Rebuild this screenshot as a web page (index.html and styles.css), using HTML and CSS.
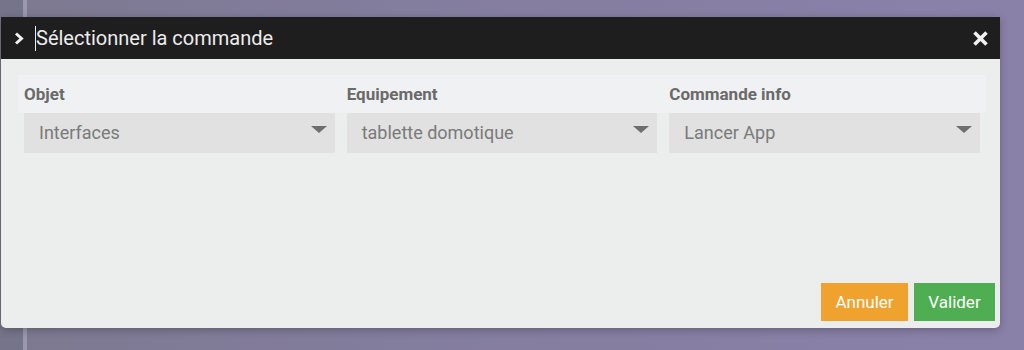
FILE: index.html
```html
<!DOCTYPE html>
<html lang="fr">
<head>
    <meta charset="UTF-8">
    <meta name="viewport" content="width=device-width, initial-scale=1.0">
    <title>Sélectionner la commande</title>
    <link rel="stylesheet" href="styles.css">
</head>
<body>
    <div class="backdrop">
        <div class="side-strip"></div>
        <div class="dialog">
            <div class="dialog-header">
                <svg class="chevron" width="11" height="13" viewBox="0 0 11 13">
                    <path d="M2 1.5 L7.5 6.5 L2 11.5" fill="none" stroke="#f2f2f2" stroke-width="3"/>
                </svg>
                <span class="title">Sélectionner la commande</span>
                <svg class="close" width="17" height="17" viewBox="0 0 17 17">
                    <path d="M2.5 2.5 L14.5 14.5 M14.5 2.5 L2.5 14.5" stroke="#f2f2f2" stroke-width="3.6"/>
                </svg>
            </div>
            <div class="dialog-body">
                <div class="form-row">
                    <div class="field">
                        <label>Objet</label>
                        <div class="select">Interfaces<span class="caret"></span></div>
                    </div>
                    <div class="field">
                        <label>Equipement</label>
                        <div class="select">tablette domotique<span class="caret"></span></div>
                    </div>
                    <div class="field">
                        <label>Commande info</label>
                        <div class="select">Lancer App<span class="caret"></span></div>
                    </div>
                </div>
            </div>
            <div class="dialog-footer">
                <button class="btn btn-warning">Annuler</button>
                <button class="btn btn-success">Valider</button>
            </div>
        </div>
    </div>
</body>
</html>
```

FILE: styles.css
```css
html, body {
    margin: 0;
    height: 100%;
}
body {
    font-family: Roboto, "Liberation Sans", sans-serif;
    background: linear-gradient(to right, #7d7990 0%, #837d9e 40%, #8a81a9 100%);
    overflow: hidden;
}
.backdrop {
    position: relative;
    height: 350px;
    padding: 17px 0 0 1px;
    box-sizing: border-box;
}
.side-strip {
    position: absolute;
    left: 0;
    top: 0;
    bottom: 0;
    width: 23px;
    background: #76748a;
    border-right: 4px solid #9a97ae;
}
.dialog {
    position: relative;
    width: 999px;
    height: 311px;
    background: #eceeed;
    border-radius: 0 0 5px 5px;
    box-shadow: 0 2px 8px rgba(0, 0, 0, 0.25);
    display: flex;
    flex-direction: column;
}
.dialog-header {
    height: 42px;
    background: #1e1e1e;
    display: flex;
    align-items: center;
    padding: 0 11px 0 13px;
}
.chevron {
    margin-right: 10px;
}
.title {
    color: #ececec;
    font-size: 20px;
    border-left: 1px solid #ececec;
    line-height: 25px;
    flex: 1;
}
.dialog-body {
    flex: 1;
    padding: 16px 14px 0 17px;
}
.form-row {
    display: flex;
    background: linear-gradient(#f0f1f2 0, #f0f1f2 38px, transparent 38px);
}
.field {
    flex: 1;
    padding: 0 6px;
}
.field label {
    display: block;
    height: 38px;
    line-height: 38px;
    font-size: 17px;
    font-weight: bold;
    color: #6a6a6a;
}
.select {
    position: relative;
    height: 40px;
    line-height: 40px;
    background: #e0e1e0;
    color: #7a7a7a;
    font-size: 18px;
    padding-left: 15px;
}
.caret {
    position: absolute;
    right: 8px;
    top: 13px;
    width: 0;
    height: 0;
    border-left: 8px solid transparent;
    border-right: 8px solid transparent;
    border-top: 7px solid #6e6e6e;
}
.dialog-footer {
    display: flex;
    justify-content: flex-end;
    gap: 6px;
    padding: 0 5px 7px 0;
}
.btn {
    height: 38px;
    border: none;
    color: #fff;
    font-family: Roboto, "Liberation Sans", sans-serif;
    font-size: 17px;
    padding: 0;
    cursor: pointer;
}
.btn-warning {
    background: #f0a22e;
    width: 87px;
}
.btn-success {
    background: #4fae52;
    width: 81px;
}
```
